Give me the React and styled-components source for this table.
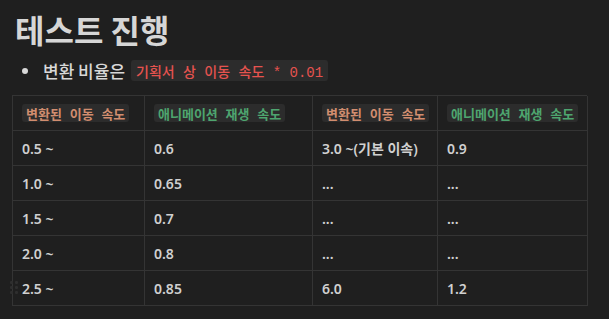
import React from "react";
import styled, { createGlobalStyle } from "styled-components";

const Global = createGlobalStyle`
  html, body { margin: 0; padding: 0; background: #1f1f1f; }
  body { font-family: "Noto Sans", "Noto Sans CJK KR", sans-serif; color: #d4d4d4; }
`;

const Page = styled.div`
  width: 609px;
  height: 319px;
  box-sizing: border-box;
  padding: 9px 22px 0 12px;
  position: relative;
  overflow: hidden;
`;

const Title = styled.h1`
  margin: 0 0 0 3px;
  font-family: "Noto Sans CJK KR", sans-serif;
  font-weight: 700;
  font-size: 32px;
  line-height: 40px;
  color: #d6d6d6;
`;

const List = styled.ul`
  margin: 10px 0 0 0;
  padding: 0;
  list-style: none;
`;

const Item = styled.li`
  display: flex;
  align-items: center;
  height: 23px;
  font-family: "Noto Sans CJK KR", sans-serif;
  font-size: 17px;
  font-weight: 500;
  color: #d8d8d8;
  &::before {
    content: "";
    width: 6px;
    height: 6px;
    border-radius: 50%;
    background: #d8d8d8;
    margin: 0 15px 0 10px;
    flex: none;
  }
`;

const Code = styled.code`
  display: inline-flex;
  align-items: center;
  font-family: "Liberation Mono", "Noto Sans CJK KR", monospace;
  font-size: ${(p) => p.$size || 14}px;
  height: ${(p) => p.$h || 21}px;
  padding: 0 ${(p) => p.$pad || 5}px;
  margin-left: ${(p) => p.$ml || 0}px;
  border-radius: 3px;
  background: #2c2c2c;
  color: ${(p) => p.$color};
  white-space: pre;
`;

const Table = styled.div`
  margin-top: 13px;
  display: grid;
  grid-template-columns: 132px 168px 125px 150px;
  grid-auto-rows: 35px;
  border-top: 1px solid #343434;
  border-left: 1px solid #343434;
  width: 575px;
  box-sizing: border-box;
  position: relative;
`;

const Cell = styled.div`
  border-right: 1px solid #343434;
  border-bottom: 1px solid #343434;
  display: flex;
  align-items: center;
  padding-left: 9px;
  font-family: "Noto Sans", "Noto Sans CJK KR", sans-serif;
  font-size: 14px;
  font-weight: 600;
  color: #d0d0d0;
  white-space: nowrap;
`;

const Handle = styled.svg`
  position: absolute;
  left: -4px;
  top: 184px;
`;

const ORANGE = "#d18d6f";
const GREEN = "#4ea56f";

const rows = [
  ["0.5 ~", "0.6", "3.0 ~(기본 이속)", "0.9"],
  ["1.0 ~", "0.65", "...", "..."],
  ["1.5 ~", "0.7", "...", "..."],
  ["2.0 ~", "0.8", "...", "..."],
  ["2.5 ~", "0.85", "6.0", "1.2"],
];

const heads = [
  ["변환된 이동 속도", ORANGE],
  ["애니메이션 재생 속도", GREEN],
  ["변환된 이동 속도", ORANGE],
  ["애니메이션 재생 속도", GREEN],
];

export default function App() {
  return (
    <Page>
      <Global />
      <Title>테스트 진행</Title>
      <List>
        <Item>
          변환 비율은
          <Code $color="#e5534f" $ml={6}>기획서 상 이동 속도 * 0.01</Code>
        </Item>
      </List>
      <Table>
        {heads.map(([t, c], i) => (
          <Cell key={"h" + i}>
            <Code $color={c} $size={13} $h={18} $pad={4}>{t}</Code>
          </Cell>
        ))}
        {rows.map((r, ri) =>
          r.map((v, ci) => <Cell key={ri + "-" + ci}>{v}</Cell>)
        )}
        <Handle width="10" height="15" viewBox="0 0 10 15">
          {[0, 1, 2].map((y) =>
            [0, 1].map((x) => (
              <rect key={x + "" + y} x={1 + x * 5} y={1 + y * 5} width="3" height="3" rx="1" fill="#2e2e2e" />
            ))
          )}
        </Handle>
      </Table>
    </Page>
  );
}
